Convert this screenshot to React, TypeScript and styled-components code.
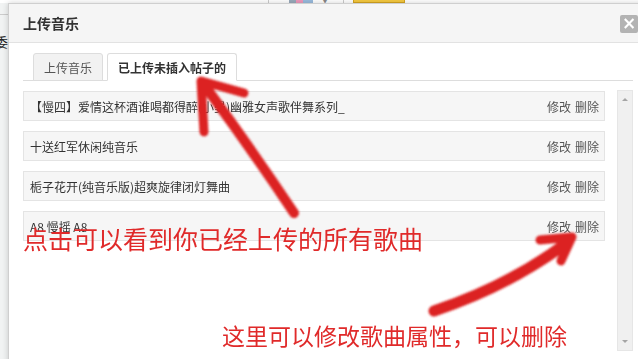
import React, { FC, ReactElement } from 'react';
import styled, { createGlobalStyle } from 'styled-components';

const GlobalStyle = createGlobalStyle`
  html, body {
    margin: 0;
    padding: 0;
    background: #f1f3f3;
    overflow: hidden;
  }
  body {
    font-family: "Noto Sans CJK SC", "Noto Sans", sans-serif;
    color: #333;
  }
`;

const songs = [
  '【慢四】爱情这杯酒谁喝都得醉(小曼)幽雅女声歌伴舞系列_',
  '十送红军休闲纯音乐',
  '栀子花开(纯音乐版)超爽旋律闭灯舞曲',
  'A8 慢摇 A8',
];

export const App: FC = (): ReactElement => (
  <>
    <GlobalStyle />
    <Page>
      <TopBar>
        <BarItem />
        <BarIcon />
        <BarCaret>▼</BarCaret>
        <BarSep />
        <YellowBtn>提交</YellowBtn>
      </TopBar>
      <Side>
        <SideLine />
        <SideText>委托</SideText>
      </Side>
    </Page>

    <Dialog>
      <Header>
        <Title>上传音乐</Title>
        <Close>×</Close>
      </Header>
      <Body>
        <Tabs>
          <Tab>上传音乐</Tab>
          <Tab active>已上传未插入帖子的</Tab>
        </Tabs>
        <ListArea>
          <Rows>
            {songs.map((s) => (
              <Row key={s}>
                <Name>{s}</Name>
                <Actions>
                  <Link>修改</Link>
                  <Link>删除</Link>
                </Actions>
              </Row>
            ))}
          </Rows>
          <ScrollBar>
            <ArrowUp />
            <ArrowDown />
          </ScrollBar>
        </ListArea>
      </Body>
    </Dialog>

    <Overlay>
      <svg width="638" height="359" viewBox="0 0 638 359">
        <defs>
          <filter id="soft" x="-10%" y="-10%" width="120%" height="120%">
            <feGaussianBlur stdDeviation="1" />
          </filter>
        </defs>
        <g
          fill="none"
          stroke="#dc2424"
          strokeLinecap="round"
          strokeLinejoin="round"
          filter="url(#soft)"
        >
          <path d="M294 213 Q252 150 205 86" strokeWidth="10" />
          <path d="M204 132 L201 81 L244 93" strokeWidth="9" />
          <path d="M434 311 Q509 286 568 242" strokeWidth="11" />
          <path d="M540 240 L572 237 L561 261" strokeWidth="9" />
        </g>
      </svg>
      <Note left={23} top={226} size={25}>点击可以看到你已经上传的所有歌曲</Note>
      <Note left={222} top={324} size={23}>这里可以修改歌曲属性，可以删除</Note>
    </Overlay>
  </>
);

export default App;

const Page = styled.div`
  width: 638px;
  height: 359px;
`;

const TopBar = styled.div`
  height: 3px;
  overflow: hidden;
  background: #fff;
  display: flex;
  align-items: flex-end;
  padding-left: 262px;
  gap: 8px;
`;

const BarItem = styled.div`
  width: 6px;
  height: 20px;
  border-right: 1px solid #ccc;
`;

const BarIcon = styled.div`
  width: 24px;
  height: 20px;
  margin-left: 12px;
  background: linear-gradient(90deg, #9ab 0 30%, #e9b 30% 60%, #9bd 60%);
`;

const BarCaret = styled.div`
  font-size: 8px;
  line-height: 6px;
  color: #888;
`;

const BarSep = styled.div`
  width: 1px;
  height: 20px;
  margin-left: 6px;
  background: #ccc;
`;

const YellowBtn = styled.div`
  width: 50px;
  height: 20px;
  margin-left: 1px;
  background: #f5c940;
  border: 1px solid #d6a520;
  font-size: 12px;
  line-height: 22px;
  color: #6a4a00;
  text-align: center;
`;

const Side = styled.div`
  width: 8px;
  overflow: hidden;
  padding-top: 11px;
`;

const SideLine = styled.div`
  height: 1px;
  background: #ccc;
`;

const SideText = styled.div`
  margin: 17px 0 0 -5px;
  font-size: 13px;
  white-space: nowrap;
  color: #222;
`;

const Dialog = styled.div`
  position: fixed;
  left: 8px;
  top: 3px;
  width: 644px;
  height: 380px;
  background: #fff;
  border: 1px solid #cfcfcf;
  box-shadow: 0 0 6px rgba(0, 0, 0, 0.18);
  display: flex;
  flex-direction: column;
`;

const Header = styled.div`
  height: 38px;
  background: #f5f5f5;
  border-bottom: 1px solid #e2e2e2;
  display: flex;
  align-items: center;
  justify-content: space-between;
  padding: 0 15px 0 14px;
`;

const Title = styled.div`
  font-size: 14px;
  font-weight: 700;
  color: #333;
`;

const Close = styled.div`
  width: 18px;
  height: 18px;
  margin-top: 1px;
  border-radius: 2px;
  background: #b3b3b3;
  color: #fff;
  font-family: "DejaVu Sans", sans-serif;
  font-weight: 700;
  font-size: 17px;
  line-height: 17px;
  text-align: center;
`;

const Body = styled.div`
  flex: 1;
  padding: 10px 20px 0 14px;
  display: flex;
  flex-direction: column;
`;

const Tabs = styled.div`
  display: flex;
  gap: 4px;
  padding-left: 10px;
  border-bottom: 1px solid #dddddd;
`;

const Tab = styled.div<{ active?: boolean }>`
  height: 26px;
  padding: 0 10px;
  margin-bottom: -1px;
  border: 1px solid #dddddd;
  border-bottom-color: ${(p) => (p.active ? '#fff' : '#dddddd')};
  border-radius: 3px 3px 0 0;
  background: ${(p) => (p.active ? '#fff' : '#f2f2f2')};
  color: ${(p) => (p.active ? '#333' : '#555')};
  font-weight: ${(p) => (p.active ? 600 : 400)};
  font-size: 12px;
  line-height: 28px;
`;

const ListArea = styled.div`
  display: flex;
  gap: 12px;
  margin-top: 9px;
  height: 261px;
`;

const Rows = styled.div`
  flex: 1;
  padding-top: 1px;
  display: flex;
  flex-direction: column;
  gap: 10px;
`;

const Row = styled.div`
  height: 28px;
  background: #f6f6f6;
  border: 1px solid #e4e4e4;
  display: flex;
  align-items: center;
  justify-content: space-between;
  padding: 0 5px 0 6px;
  font-size: 12px;
`;

const Name = styled.span`
  color: #333;
  white-space: nowrap;
`;

const Actions = styled.span`
  display: flex;
  gap: 4px;
`;

const Link = styled.span`
  color: #555;
  cursor: pointer;
`;

const ScrollBar = styled.div`
  width: 14px;
  background: #f0f0f0;
  border: 1px solid #e6e6e6;
  display: flex;
  flex-direction: column;
  justify-content: space-between;
  align-items: center;
  padding: 7px 0;
`;

const ArrowUp = styled.div`
  width: 0;
  height: 0;
  border-left: 3px solid transparent;
  border-right: 3px solid transparent;
  border-bottom: 3px solid #a5a5a5;
`;

const ArrowDown = styled.div`
  width: 0;
  height: 0;
  border-left: 3px solid transparent;
  border-right: 3px solid transparent;
  border-top: 3px solid #a5a5a5;
`;

const Overlay = styled.div`
  position: fixed;
  inset: 0;
  pointer-events: none;
  svg {
    position: absolute;
    left: 0;
    top: 0;
  }
`;

const Note = styled.div<{ left: number; top: number; size: number }>`
  position: absolute;
  left: ${(p) => p.left}px;
  top: ${(p) => p.top}px;
  font-size: ${(p) => p.size}px;
  line-height: 1;
  color: #e02a2a;
  white-space: nowrap;
`;
